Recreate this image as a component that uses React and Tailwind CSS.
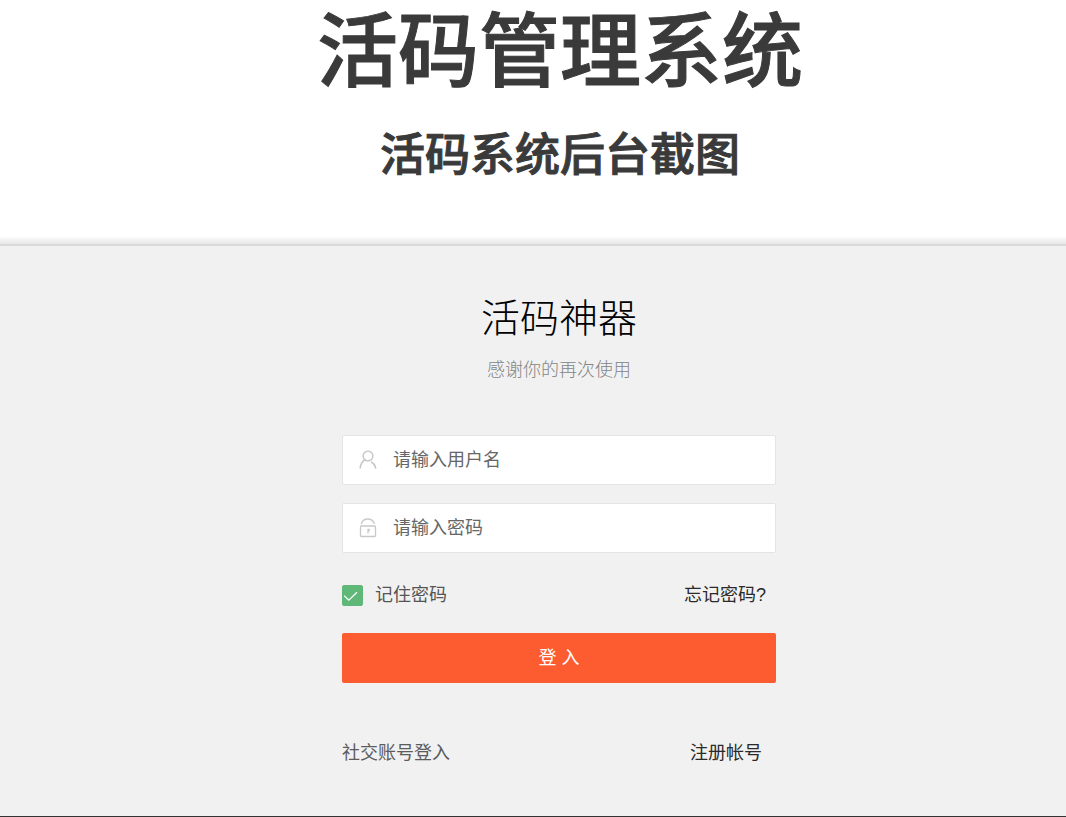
function UserIcon() {
  return (
    <svg viewBox="0 0 18 20" className="h-5 w-[18px] shrink-0" fill="none" stroke="#c8c8c8" strokeWidth="1.6" strokeLinecap="round" aria-hidden="true">
      <circle cx="9" cy="6" r="4.8" />
      <path d="M6 9.8C3.4 11.4 1.6 14.6 1.2 18M12.6 12.2C14.8 13.4 16.2 15.4 16.6 18" />
    </svg>
  );
}

function LockIcon() {
  return (
    <svg viewBox="0 0 18 20" className="h-5 w-[18px] shrink-0" fill="none" stroke="#c8c8c8" strokeWidth="1.3" strokeLinecap="round" aria-hidden="true">
      <rect x="1.5" y="8" width="15" height="10.5" rx="1" />
      <path d="M2.4 5.8C3.2 2.8 5.6 1 8.8 1C12 1 14.2 2.8 15.2 5.4" />
      <path d="M9 11.4V15M9 11.4H10.2V12.6H9" />
    </svg>
  );
}

function Field({ id, label, type, autoComplete, icon }) {
  return (
    <label htmlFor={id} className="flex h-[50px] items-center gap-4 rounded-xs border border-[#e4e4e4] bg-white px-4">
      {icon}
      <input
        id={id}
        type={type}
        autoComplete={autoComplete}
        aria-label={label}
        placeholder={label}
        className="h-full min-w-0 flex-1 bg-transparent text-[#333] outline-none placeholder:text-[#666]"
      />
    </label>
  );
}

export default function App() {
  return (
    <div className="flex min-h-screen flex-col border-b border-[#333] bg-[#f1f1f1] font-['Liberation_Sans','Noto_Sans_CJK_SC',sans-serif] text-lg">
      <header className="bg-white text-center font-medium text-[#3a3a3a]">
        <div className="pt-1.5 pb-12 pl-[54px] [-webkit-text-stroke:1px_#3a3a3a]">
          <h1 className="text-[81px] leading-[92px]">活码管理系统</h1>
          <h2 className="mt-[26px] text-[45px] leading-[64px]">活码系统后台截图</h2>
        </div>
        <div className="h-2.5 border-b-2 border-[#dadada] bg-linear-to-b from-white to-[#e6e6e6]" />
      </header>
      <main className="flex justify-center pl-[52px]">
        <form className="w-full max-w-[434px]" onSubmit={(event) => event.preventDefault()}>
          <h3 className="mt-12 text-center text-[39px] leading-[50px] font-light text-black">活码神器</h3>
          <p className="mt-3 text-center leading-7 font-light text-[#858585]">感谢你的再次使用</p>
          <div className="mt-[51px] flex flex-col gap-[18px]">
            <Field id="username" label="请输入用户名" type="text" autoComplete="username" icon={<UserIcon />} />
            <Field id="password" label="请输入密码" type="password" autoComplete="current-password" icon={<LockIcon />} />
          </div>
          <div className="mt-7 flex items-center justify-between pr-2.5">
            <label className="flex items-center gap-3 leading-7 text-[#555]">
              <span className="relative flex size-[21px]">
                <input type="checkbox" defaultChecked className="peer size-full appearance-none rounded-xs border border-[#d2d2d2] bg-white checked:border-[#5fb878] checked:bg-[#5fb878]" />
                <svg viewBox="0 0 21 21" className="pointer-events-none absolute inset-0 hidden peer-checked:block" fill="none" stroke="white" strokeWidth="1.2" aria-hidden="true">
                  <path d="M2.2 10.8L6.8 15.2L15 7.2" />
                </svg>
              </span>
              记住密码
            </label>
            <a href="#forgot" className="leading-7 text-[#2a2a2a]">忘记密码?</a>
          </div>
          <button type="submit" className="mt-6 h-[50px] w-full rounded-xs bg-[#fc5c2f] text-white">登 入</button>
          <div className="mt-14 mb-12 flex justify-between pr-3.5 leading-7">
            <span className="text-[#5c5c5c]">社交账号登入</span>
            <a href="#register" className="text-[#2a2a2a]">注册帐号</a>
          </div>
        </form>
      </main>
    </div>
  );
}
